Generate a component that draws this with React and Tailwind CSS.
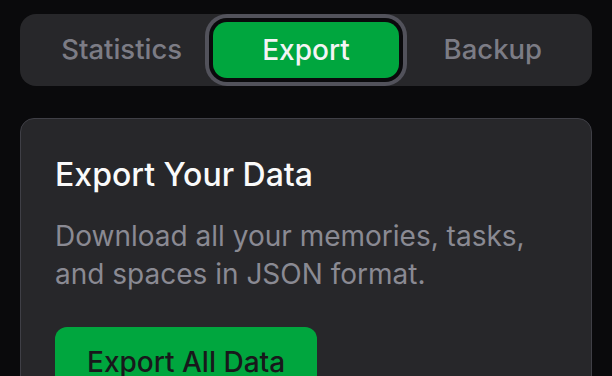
export default function App() {
  return (
    <div
      className="w-[612px] h-[376px] overflow-hidden bg-[#0a0a0c] px-5 pt-[14px]"
      style={{ fontFamily: 'Inter, "Noto Sans", sans-serif' }}
    >
      <div className="grid grid-cols-3 rounded-[16px] bg-[#27272a] p-2 h-[72px]">
        <div className="flex items-center justify-center pl-[2px] text-[27.5px] font-medium text-[#7c7c85]">
          Statistics
        </div>
        <div className="flex items-center justify-center rounded-[14px] bg-[#00a63e] text-[28px] font-medium text-[#f4f4f5] ring-4 ring-[#52525b] ring-offset-4 ring-offset-[#0a0a0c]">
          Export
        </div>
        <div className="flex items-center justify-center pl-[3px] text-[27.5px] font-medium text-[#7c7c85]">
          Backup
        </div>
      </div>
      <div className="mt-8 rounded-[14px] border border-[#3f3f46] bg-[#27272a] px-[34px] pt-[36px] pb-10">
        <h2 className="text-[32px] leading-[40px] font-medium text-[#fafafa]">Export Your Data</h2>
        <p className="mt-[22px] w-[500px] text-[28px] leading-[38px] text-[#8a8a93]">
          Download all your memories, tasks, and spaces in JSON format.
        </p>
        <button className="mt-[34px] h-[70px] rounded-[12px] bg-[#00a63e] px-8 text-[28px] font-medium text-[#18181b]">
          Export All Data
        </button>
      </div>
    </div>
  );
}
